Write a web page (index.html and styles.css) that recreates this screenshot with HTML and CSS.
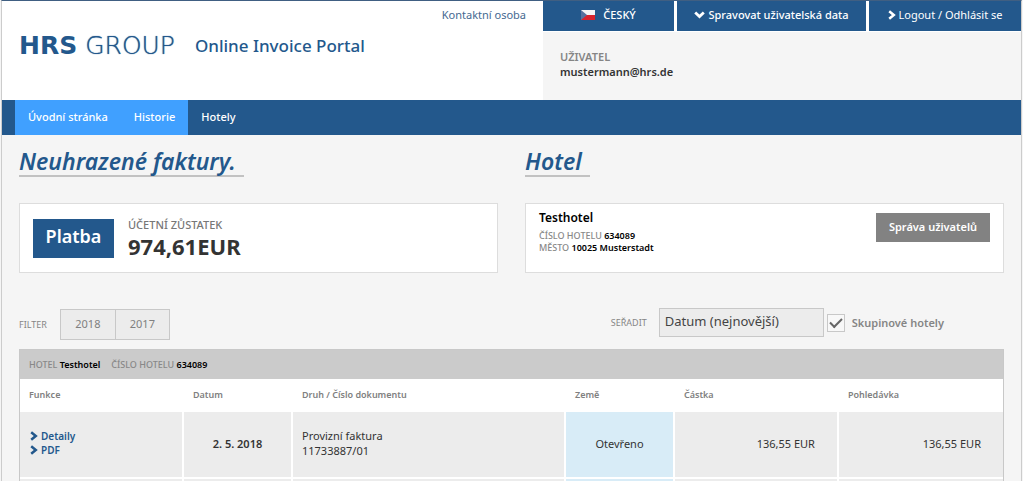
FILE: index.html
```html
<!DOCTYPE html>
<html lang="cs">
<head>
<meta charset="utf-8">
<title>Online Invoice Portal</title>
<link rel="stylesheet" href="styles.css">
</head>
<body>
<svg class="symbols" aria-hidden="true">
  <symbol id="chevron" viewBox="0 0 8 10"><path d="M1.2 1.2 5.8 5 1.2 8.8" fill="none" stroke="currentColor" stroke-width="2.5"/></symbol>
</svg>
<div class="page">
  <header class="header">
    <div class="brand">
      <div class="logo"><b>HRS</b> GROUP</div>
      <div class="portal">Online Invoice Portal</div>
    </div>
    <a class="contact" href="#">Kontaktní osoba</a>
    <div class="account">
      <div class="actions">
        <button class="action action-lang" type="button">
          <svg class="flag" viewBox="0 0 14 10" aria-hidden="true"><path fill="#f4f4f6" d="M0 0h14v5H0z"/><path fill="#d8232e" d="M0 5h14v5H0z"/><path fill="#56709f" d="M0 0l6 5-6 5z"/></svg>
          ČESKÝ
        </button>
        <button class="action action-data" type="button">
          <svg class="down" viewBox="0 0 11 8" aria-hidden="true"><path d="M1.2 1.5 5.5 5.5 9.8 1.5" fill="none" stroke="currentColor" stroke-width="2.8"/></svg>
          Spravovat uživatelská data
        </button>
        <button class="action action-logout" type="button">
          <svg class="chevron" aria-hidden="true"><use href="#chevron"/></svg>
          Logout / Odhlásit se
        </button>
      </div>
      <div class="user"><span class="user-label">UŽIVATEL</span><strong>mustermann@hrs.de</strong></div>
    </div>
  </header>
  <nav class="nav">
    <a class="nav-link active" href="#">Úvodní stránka</a>
    <a class="nav-link active" href="#">Historie</a>
    <a class="nav-link" href="#">Hotely</a>
  </nav>
  <main class="main">
    <div class="overview">
      <section>
        <h2 class="title">Neuhrazené faktury.</h2>
        <div class="card balance">
          <button class="pay" type="button">Platba</button>
          <div><div class="balance-label">ÚČETNÍ ZŮSTATEK</div><div class="amount">974,61EUR</div></div>
        </div>
      </section>
      <section>
        <h2 class="title">Hotel</h2>
        <div class="card hotel">
          <div>
            <h3 class="hotel-name">Testhotel</h3>
            <p class="fact"><span>ČÍSLO HOTELU</span> <b>634089</b></p>
            <p class="fact"><span>MĚSTO</span> <b>10025 Musterstadt</b></p>
          </div>
          <button class="manage" type="button">Správa uživatelů</button>
        </div>
      </section>
    </div>
    <div class="toolbar">
      <span class="tool-label">FILTER</span>
      <div class="years"><button class="year" type="button">2018</button><button class="year" type="button">2017</button></div>
      <div class="sorting">
        <label class="tool-label" for="sort">SEŘADIT</label>
        <select class="sort" id="sort"><option>Datum (nejnovější)</option></select>
        <label class="group"><input class="check" type="checkbox" checked><span>Skupinové hotely</span></label>
      </div>
    </div>
    <table class="invoices">
      <colgroup><col class="c-func"><col class="c-date"><col class="c-doc"><col class="c-state"><col class="c-sum"><col class="c-sum"></colgroup>
      <thead>
        <tr><th class="hotel-row" colspan="6"><span>HOTEL</span> <b class="hotel-cell">Testhotel</b><span>ČÍSLO HOTELU</span> <b>634089</b></th></tr>
        <tr><th>Funkce</th><th>Datum</th><th>Druh / Číslo dokumentu</th><th>Země</th><th>Částka</th><th>Pohledávka</th></tr>
      </thead>
      <tbody>
        <tr class="invoice">
          <td class="links">
            <a href="#"><svg class="chevron" aria-hidden="true"><use href="#chevron"/></svg>Detaily</a>
            <a href="#"><svg class="chevron" aria-hidden="true"><use href="#chevron"/></svg>PDF</a>
          </td>
          <td class="date">2. 5. 2018</td>
          <td>Provizní faktura<br>11733887/01</td>
          <td class="state">Otevřeno</td>
          <td class="sum">136,55 EUR</td>
          <td class="sum">136,55 EUR</td>
        </tr>
        <tr class="next"><td></td><td></td><td></td><td class="state"></td><td></td><td></td></tr>
      </tbody>
    </table>
  </main>
</div>
</body>
</html>
```
FILE: styles.css
```css
* { box-sizing: border-box; }
body {
  margin: 0;
  background: #f5f5f5;
  color: #333;
  font: 11px/15px "Noto Sans", "Open Sans", sans-serif;
}
button, select, input { font: inherit; margin: 0; border: 0; border-radius: 0; }
a { text-decoration: none; }
h2, h3, p { margin: 0; }
.symbols { display: none; }
.page {
  margin: 0 1px;
  border: 1px solid #ccc;
  border-top-color: #405f82;
  border-bottom: 0;
}

.header { display: flex; height: 99px; background: #fff; color: #23588c; }
.brand { display: flex; flex: 1; align-items: center; gap: 20px; padding: 0 0 9px 17px; white-space: nowrap; }
.logo { font: 200 25px/28px "DejaVu Sans", sans-serif; text-shadow: 0 0 1px currentColor; }
.logo b { font-weight: 700; text-shadow: none; }
.portal { font-size: 17px; font-weight: 500; line-height: 24px; }
.contact { padding: 6px 17px 0 0; color: #456991; }
.account { display: flex; flex-direction: column; width: 478px; background: #f5f5f5; }
.actions { display: flex; gap: 3px; background: #fff; padding-bottom: 1px; }
.action {
  display: flex;
  align-items: center;
  justify-content: center;
  gap: 3px;
  height: 30px;
  padding: 0 0 3px;
  background: #23588c;
  color: #fff;
  font-weight: 500;
  white-space: nowrap;
}
.action-lang { flex: 131; gap: 8px; }
.action-data { flex: 189; }
.action-logout { flex: 152; font-weight: 400; }
.flag { width: 14px; height: 10px; }
.down { width: 11px; height: 8px; }
.chevron { width: 8px; height: 10px; }
.user { display: flex; flex-direction: column; padding: 17px; color: #333; }
.user-label { color: #858585; font-weight: 600; }
.user strong { font-weight: 600; }

.nav { display: flex; height: 35px; padding-left: 13px; background: #23588c; }
.nav-link { padding: 9px 13px; color: #fff; font-weight: 500; }
.nav-link.active { background: #40a0ff; }

.main { padding: 13px 17px 0; }
.overview { display: grid; grid-template-columns: 1fr 1fr; gap: 27px; }
.title {
  width: fit-content;
  padding-right: 8px;
  border-bottom: 2px solid #c2c2c2;
  color: #23588c;
  font-size: 23px;
  font-style: italic;
  font-weight: 600;
  line-height: 27px;
}
.card { display: flex; height: 70px; margin-top: 26px; border: 1px solid #ddd; background: #fff; }
.balance { align-items: center; gap: 14px; padding-left: 13px; }
.pay { width: 81px; height: 39px; padding: 0 0 3px; background: #23588c; color: #fff; font-size: 18px; font-weight: 600; }
.balance-label { color: #777; font-size: 11px; font-weight: 500; line-height: 16px; }
.amount { font-size: 22px; font-weight: 700; line-height: 26px; }
.hotel { justify-content: space-between; padding: 5px 13px 0; color: #000; }
.hotel-name { margin-bottom: 3px; font-size: 12px; font-weight: 600; line-height: 18px; }
.fact { font-size: 9px; line-height: 12px; }
.fact span, .hotel-row span { color: #888; font-weight: 500; }
.fact b, .hotel-row b { font-weight: 600; }
.manage { width: 114px; height: 29px; margin-top: 4px; padding: 0 0 2px; background: #828282; color: #fff; font-weight: 600; }

.toolbar { display: flex; align-items: center; margin-top: 35px; color: #858585; }
.tool-label { font-size: 9px; }
.years { display: flex; margin-left: 13px; border: 1px solid #c8c8c8; }
.year { width: 54px; height: 29px; padding: 0 0 2px; background: #ececec; color: #808080; }
.year + .year { border-left: 1px solid #c8c8c8; }
.sorting { display: flex; align-items: center; margin-left: auto; padding: 0 60px 3px 0; }
.sort { appearance: none; width: 165px; height: 29px; margin-left: 12px; padding: 0 5px 2px; border: 1px solid #c8c8c8; background: #ececec; color: #444; font-size: 13px; }
.group { display: flex; align-items: center; gap: 7px; margin-left: 3px; font-weight: 600; }
.check {
  appearance: none;
  display: grid;
  place-items: center;
  width: 18px;
  height: 18px;
  border: 1px solid #c8c8c8;
  background: #f8f8f8;
}
.check:checked::before { content: ""; width: 10px; height: 5px; margin-bottom: 3px; border: solid #666; border-width: 0 0 2px 2px; rotate: -45deg; }

.invoices { width: 100%; margin-top: 9px; border: 1px solid #c8c8c8; border-bottom: 0; border-spacing: 0; table-layout: fixed; background: #fff; }
.c-func, .c-sum { width: 16.7%; }
.c-date, .c-state { width: 11.1%; }
.c-doc { width: 27.8%; }
.invoices th { height: 33px; padding: 0 9px 2px; color: #808080; font-size: 9px; font-weight: 600; text-align: left; }
.invoices .hotel-row { height: 29px; padding: 0 9px 1px; background: #cbcbcb; color: #000; }
.hotel-cell { margin-right: 11px; }
.invoices td { padding: 0 9px 3px; border-right: 2px solid #fff; border-bottom: 2px solid #fff; background: #ececec; background-clip: padding-box; }
.invoices td:last-child { border-right: 0; }
.invoice td { height: 67px; }
.next td { height: 4px; border-bottom: 0; }
.links a { display: flex; align-items: center; gap: 3px; color: #23588c; font-size: 10px; font-weight: 600; line-height: 14px; }
.links .chevron { margin-left: 1px; }
.invoices .date { font-weight: 600; text-align: center; }
.invoices .state { background-color: #d8ecf7; text-align: center; }
.invoices .sum { padding-right: 22px; text-align: right; }
```
